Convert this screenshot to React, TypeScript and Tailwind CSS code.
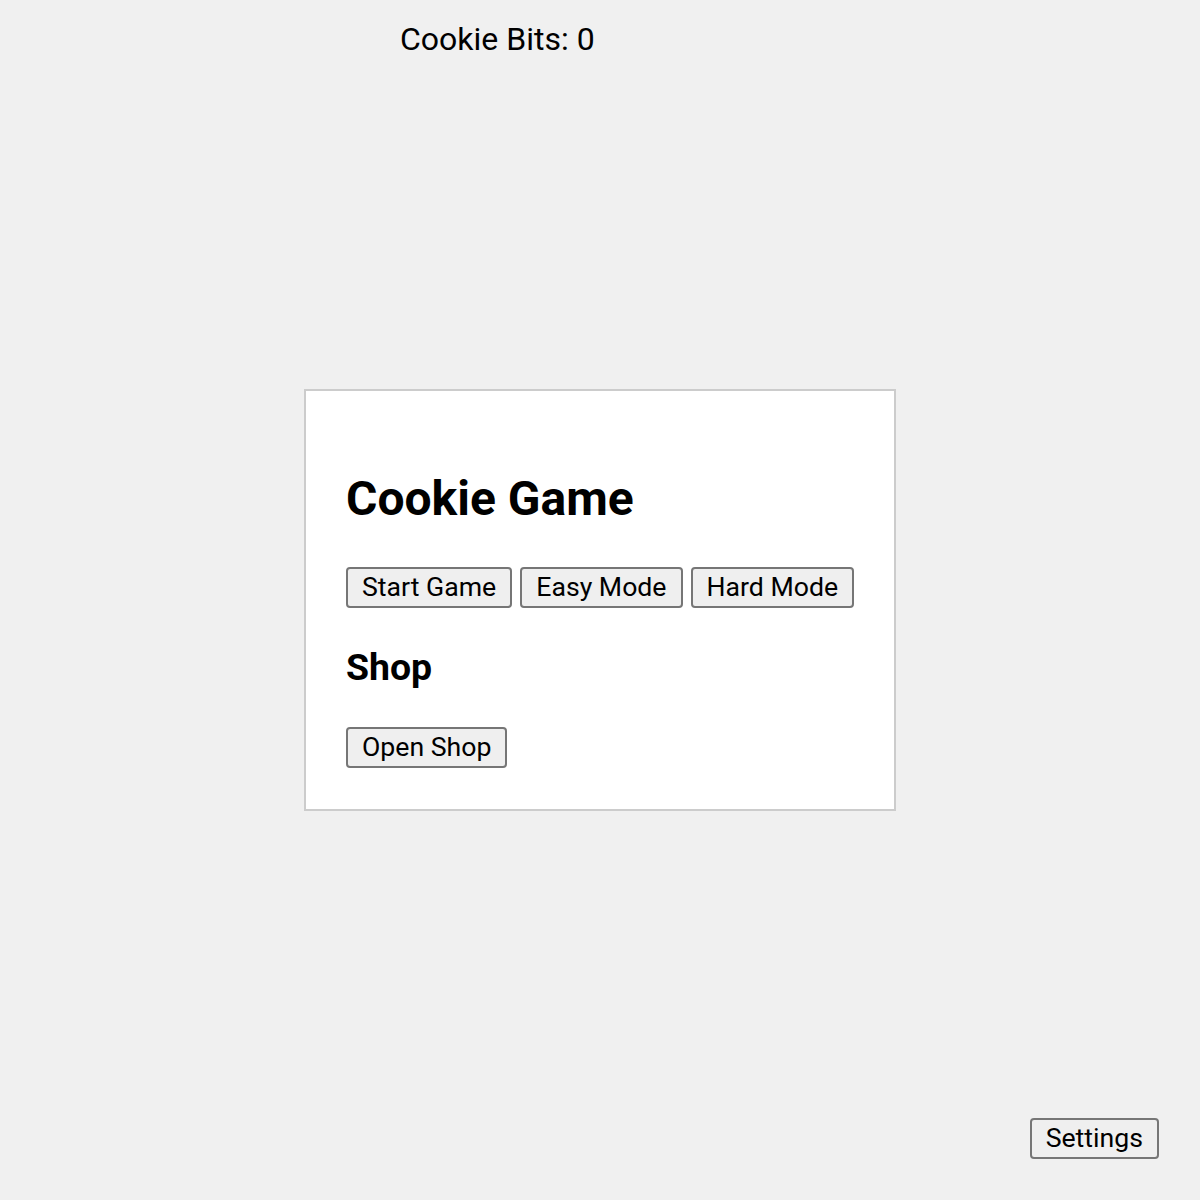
import React, { useState } from 'react';

const btn =
  'shrink-0 whitespace-nowrap h-[41px] px-[14px] bg-[#efefef] border-2 border-[#767676] rounded-[4px] text-[26.67px] leading-[33px] text-black';

export default function App() {
  const [bits] = useState(0);

  return (
    <div className="relative w-full h-[1200px] bg-[#f0f0f0] text-black font-['Roboto',sans-serif]">
      <div className="absolute top-[21px] left-[400px] text-[32px] leading-[37px]">Cookie Bits: {bits}</div>

      <div className="flex h-full items-center justify-center">
        <div className="w-[592px] h-[422px] bg-white border-2 border-[#cccccc] px-[40px] pt-[80px]">
          <h2 className="text-[48px] leading-[56px] font-bold">Cookie Game</h2>
          <div className="flex gap-2 mt-[40px]">
            <button className={btn}>Start Game</button>
            <button className={btn}>Easy Mode</button>
            <button className={btn}>Hard Mode</button>
          </div>
          <h3 className="text-[37.44px] leading-[44px] font-bold mt-[37px]">Shop</h3>
          <div className="flex mt-[38px]">
            <button className={btn}>Open Shop</button>
          </div>
        </div>
      </div>

      <button className={`${btn} absolute right-[41px] bottom-[41px]`}>Settings</button>
    </div>
  );
}
